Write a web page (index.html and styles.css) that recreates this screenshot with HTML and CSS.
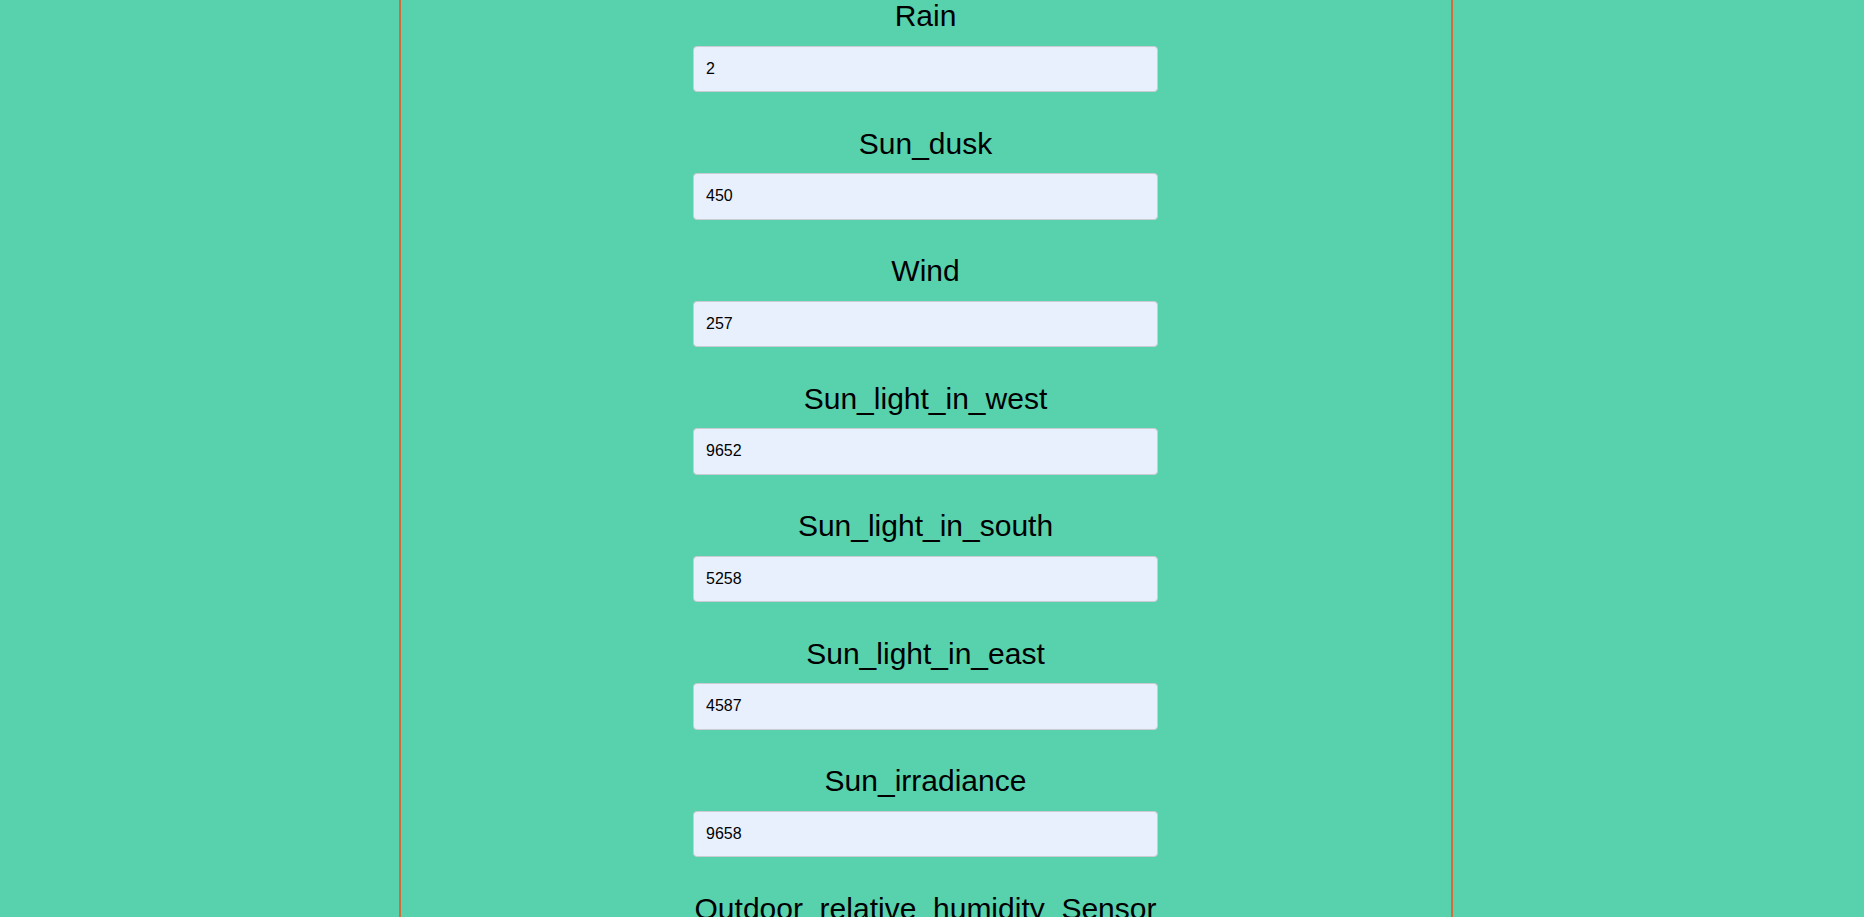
FILE: index.html
```html
<!DOCTYPE html>
<html lang="en">
<head>
<meta charset="utf-8">
<title>Sensors</title>
<link rel="stylesheet" href="styles.css">
</head>
<body>
<div class="page">
  <form class="sensors">
    <div class="field">
      <label class="field-label" for="rain">Rain</label>
      <input class="field-input" id="rain" type="text" value="2">
    </div>
    <div class="field">
      <label class="field-label" for="dusk">Sun_dusk</label>
      <input class="field-input" id="dusk" type="text" value="450">
    </div>
    <div class="field">
      <label class="field-label" for="wind">Wind</label>
      <input class="field-input" id="wind" type="text" value="257">
    </div>
    <div class="field">
      <label class="field-label" for="west">Sun_light_in_west</label>
      <input class="field-input" id="west" type="text" value="9652">
    </div>
    <div class="field">
      <label class="field-label" for="south">Sun_light_in_south</label>
      <input class="field-input" id="south" type="text" value="5258">
    </div>
    <div class="field">
      <label class="field-label" for="east">Sun_light_in_east</label>
      <input class="field-input" id="east" type="text" value="4587">
    </div>
    <div class="field">
      <label class="field-label" for="irr">Sun_irradiance</label>
      <input class="field-input" id="irr" type="text" value="9658">
    </div>
    <div class="field">
      <label class="field-label" for="hum">Outdoor_relative_humidity_Sensor</label>
      <input class="field-input" id="hum" type="text" value="65">
    </div>
  </form>
</div>
</body>
</html>
```

FILE: styles.css
```css
html, body {
  margin: 0;
  padding: 0;
  background: #57d2ad;
}

body {
  font-family: "Liberation Sans", Arial, sans-serif;
  color: #000;
}

.page {
  box-sizing: border-box;
  width: 1054px;
  margin-left: 399px;
  min-height: 100vh;
  border-left: 2px solid #cf6d3b;
  border-right: 2px solid #cf6d3b;
}

.sensors {
  display: flex;
  flex-direction: column;
  align-items: center;
  margin: -0.8px 0 0;
  padding-right: 1px;
}

.field {
  display: flex;
  flex-direction: column;
  align-items: center;
  margin-bottom: 34.5px;
}

.field-label {
  font-size: 30px;
  line-height: 34.5px;
  margin-bottom: 12.1px;
}

.field-input {
  box-sizing: border-box;
  width: 465px;
  height: 46.4px;
  padding: 12px;
  font-family: "Liberation Sans", Arial, sans-serif;
  font-size: 16px;
  color: #000;
  background: #e8f0fe;
  border: 1px solid #c9ccd0;
  border-radius: 4px;
  outline: none;
}
```
